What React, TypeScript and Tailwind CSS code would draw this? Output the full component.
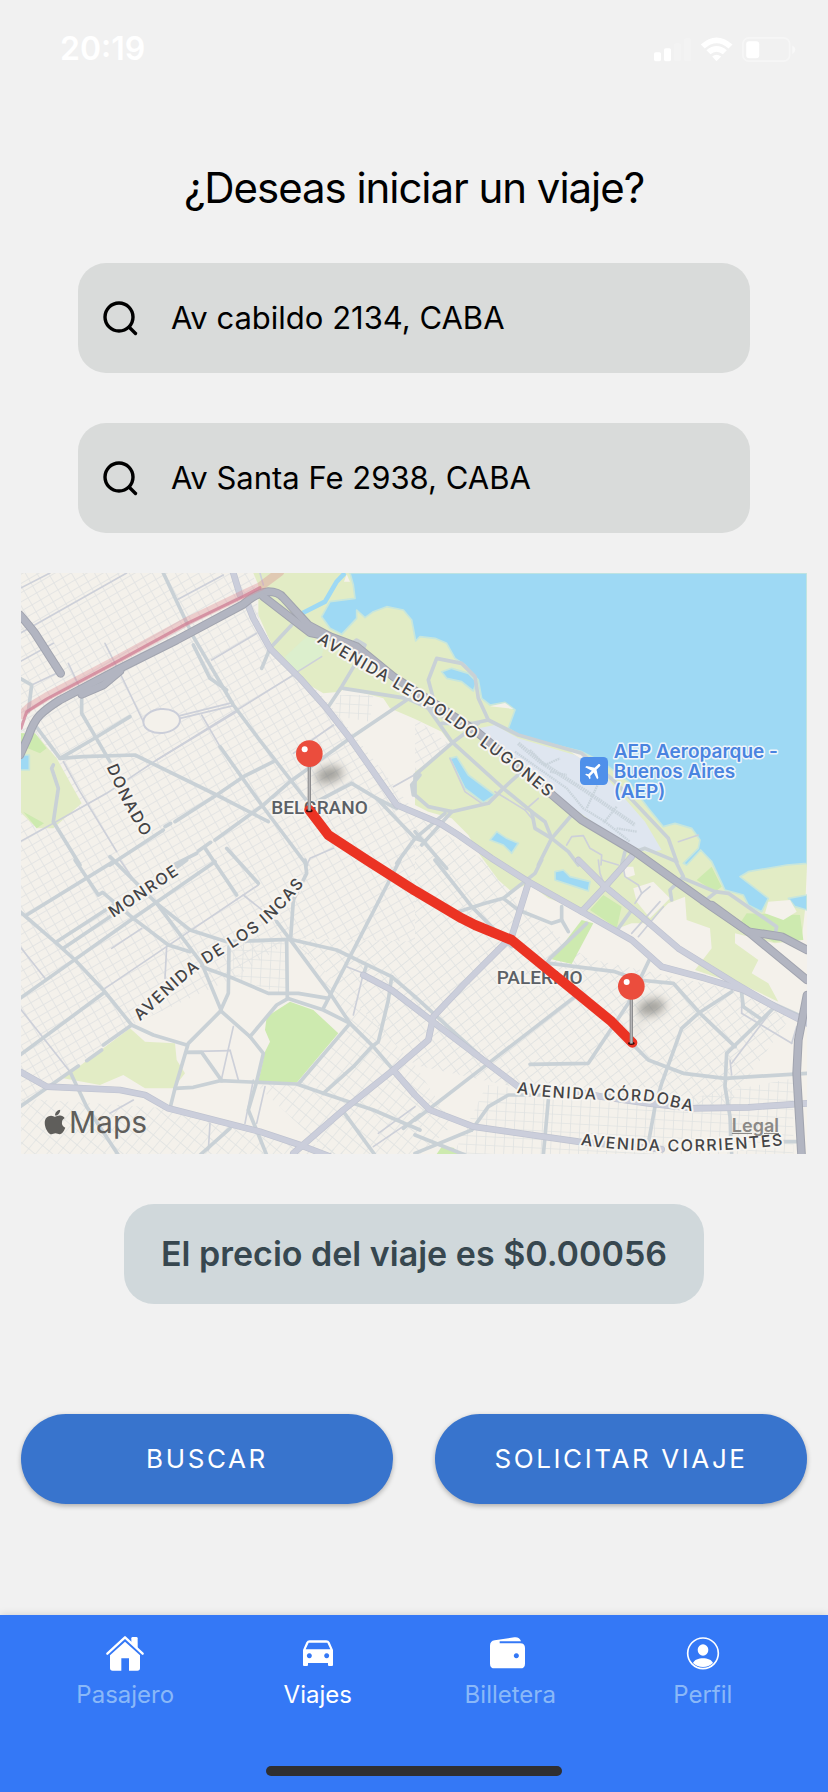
import React, { useState } from "react";
import { FaApple } from "react-icons/fa";
import { MdFlight } from "react-icons/md";

/* ---------- Map data: one list of points per line, by sector ---------- */

type Sector = { shift: string; lines: string[] };

const NE = "translate(1185 0)";
const SW = "translate(0 885)";
const SE = "translate(1185 885)";

const thinStreets: Sector[] = [
  {
    shift: "translate(0 0)",
    lines: [
      "0,70 90,24", "0,205 320,24", "0,290 100,235", "255,235 310,345 370,470", "470,105 610,30",
      "145,295 190,390", "545,450 600,545", "480,452 640,412", "480,460 640,422", "410,585 820,330",
      "130,590 180,680 290,860", "0,830 100,775 260,685 410,585 650,440", "35,360 110,325", "575,285 710,205",
      "720,24 730,60", "1120,665 1200,620", "820,565 940,480", "860,900 870,880 940,850", "825,325 905,275",
    ],
  },
  {
    shift: NE,
    lines: [
      "105,580 150,680 200,715", "240,680 330,735 350,760", "455,840 470,815 505,812 525,850 560,870 558,900",
      "560,885 610,900", "790,830 850,810", "370,700 330,735",
    ],
  },
  {
    shift: SW,
    lines: [
      "0,260 75,355", "0,445 150,635", "440,260 435,355", "255,385 440,260 670,105 715,75", "670,105 770,185",
      "640,500 605,655", "630,570 655,660", "500,575 630,572", "980,320 1030,340 1000,465", "735,680 710,790",
      "700,660 675,790", "570,790 565,870", "270,760 340,720", "275,265 365,205", "1060,860 1185,775",
      "1075,820 1185,740", "300,0 345,65",
    ],
  },
  {
    shift: SE,
    lines: [
      "945,600 950,645", "1075,445 950,610", "1130,550 980,460", "620,0 630,50 670,75 680,100 660,130",
      "650,220 735,125", "670,230 745,140", "550,0 555,40 570,80", "680,100 705,80", "1130,550 1145,500",
      "980,400 980,460",
    ],
  },
];

const streets: Sector[] = [
  {
    shift: "translate(0 0)",
    lines: [
      "430,24 520,215 640,420 715,520 870,720", "520,240 570,340 620,375", "185,400 185,445 270,590",
      "45,480 120,580 215,525 330,455", "120,580 190,575 345,570 590,690 745,770", "0,340 35,360 25,440",
      "600,545 725,720 860,900", "270,900 430,795", "435,785 452,775", "465,770 590,690 670,635 760,590",
      "440,910 530,865", "535,858 572,832", "585,825 730,720 810,650 990,520 1160,405", "970,370 1160,400 1250,440",
      "925,425 965,365 1010,290 1035,240 1010,225 990,240", "995,655 1070,700 1185,820", "890,710 995,655",
      "100,600 95,610 115,670 100,770 180,900", "1130,895 1185,820 1275,745", "555,850 650,990",
      "620,850 715,955", "725,310 750,250 815,180", "1070,700 1130,730", "1180,690 1175,660 1200,630",
    ],
  },
  {
    shift: NE,
    lines: [
      "80,455 60,420 40,345 65,280 140,295 180,335 190,400 220,465 310,510 500,565 600,650 760,820 785,890",
      "220,465 175,475 80,475", "190,475 110,535 0,630 0,690 40,725 110,740 220,715 265,670 320,620",
      "0,410 40,430 110,530 265,670 350,740 390,770 410,820 460,860 490,900", "350,740 360,790 410,820",
      "470,750 410,820 370,900", "0,800 60,870 95,910", "110,740 20,840", "0,820 30,830", "620,900 630,860",
      "660,860 690,850 785,890",
    ],
  },
  {
    shift: SW,
    lines: [
      "0,155 110,250 165,300 250,390 335,495 400,525 500,555", "20,165 280,5", "110,245 280,135",
      "130,265 270,170 500,0", "0,415 340,175 585,5", "0,585 250,400", "165,0 235,105 248,97 340,175",
      "270,-10 340,60 410,130 545,310 605,455 690,530 730,580 710,665 685,750 740,885",
      "410,130 510,210 620,245 810,238 950,270 1115,350 1185,410", "340,175 445,255 510,275",
      "545,320 640,355 745,400 835,400 925,415", "627,260 625,400 600,455 505,550 465,685 450,745",
      "800,240 802,415 910,450 990,490", "810,238 930,400 990,490 1060,560 1120,630", "1140,0 990,290 910,445",
      "690,530 770,435 805,415", "335,495 250,555", "245,570 200,602", "175,618 0,740",
      "465,685 520,682 600,662 830,672 910,700 1060,750 1200,810", "500,577 545,577 605,662", "990,490 835,672",
      "1115,350 1105,420 1075,545 1055,560 1000,620 910,700", "150,635 200,740 295,885", "970,755 1065,885",
      "630,805 540,885", "770,185 810,238", "855,0 860,40 820,120 812,235", "1040,315 1030,345", "1150,805 1200,765",
    ],
  },
  {
    shift: SE,
    lines: [
      "60,0 170,140 290,260", "130,155 210,130 265,115 360,40 380,0", "265,115 310,150 410,190 440,180",
      "440,140 440,180 460,215", "515,190 405,295 395,310", "405,310 600,335 670,360 775,370 855,460 960,560",
      "705,295 640,430 520,610 345,613", "950,395 850,460 800,505 740,670 720,740 700,850",
      "660,560 700,600 805,640 930,655 1176,640", "980,400 985,440 1035,475",
      "1080,440 935,580 930,680 945,770 950,885", "480,410 220,610 0,780", "0,410 220,610",
      "400,705 280,705 220,740 170,810", "0,825 150,885", "0,880 170,810", "400,720 385,885",
      "610,205 650,150", "770,120 765,90 805,50 780,0", "805,55 900,95 940,100 1085,200 1080,225", "860,130 905,95",
      "985,390 1150,465", "1100,845 1145,845",
    ],
  },
];

const avenues: Sector[] = [
  {
    shift: "translate(0 0)",
    lines: ["640,24 660,90", "680,110 700,160 750,250 840,340 920,430 990,520 1130,720 1260,775 1315,810 1415,880 1525,950 1685,1040 1835,1125 1925,1205 2055,1240 2170,1275 2245,1315 2361,1375"],
  },
  {
    shift: SW,
    lines: [
      "0,635 80,680 300,690 375,705 445,745 720,815 840,855 930,890",
      "820,880 970,750 1120,630 1225,540 1240,470 1330,375 1430,275 1475,230 1525,70",
      "1120,630 1185,705 1230,750 1360,800 1675,845 1925,868", "1030,345 1115,390 1245,490 1495,680",
    ],
  },
  {
    shift: SE,
    lines: [
      "490,695 560,710 700,730 835,745 1000,742 1176,730", "490,0 570,80 680,170 790,265 960,370 1080,440 1176,485",
      "500,155 570,80 650,-10",
    ],
  },
];

const highways = [
  "M0 570 L25 515 Q40 470 60 450 Q80 430 120 405 L300 310 L470 225 L670 118 Q710 82 745 80 Q775 80 790 98 L865 180 L930 215 L1010 245 L1120 335 L1250 420 L1370 500 L1585 680 L1685 765 L1845 860 L2075 1025 L2185 1100 L2361 1245",
  "M0 150 Q30 185 45 205 L122 325",
  "M185 388 L250 360 L300 318",
  "M730 95 L870 203 L930 215",
  "M2075 1020 L2185 1100 L2285 1115 L2361 1155",
  "M2361 1290 L2335 1425 L2330 1525 L2345 1775",
];

const parks = [
  "700,24 715,60 715,150 760,250 800,300 850,350 910,385 960,380 975,370 1090,400 1110,430 1185,462 1265,500 1295,540 1185,620 1185,720 1225,740 1295,760 1345,810 1380,870 1435,945 1475,980 1525,955 1585,1000 1685,1035 1730,1055 1795,1090 1835,1075 1885,1075 1945,1015 1995,995 2000,1065 2070,1090 2075,1150 2025,1215 2085,1235 2170,1260 2275,1310 2245,1255 2195,1225 2215,1185 2145,1135 2145,1105 2265,1135 2345,1125 2355,1035 2361,900 2361,24",
  "0,505 45,505 110,580 185,715 100,790 50,790 0,740",
  "330,1390 375,1430 465,1435 470,1485 495,1525 460,1570 375,1570 310,1530 240,1560 130,1540",
];

const woods = [
  "810,1310 880,1335 955,1405 830,1553 715,1550 735,1460 750,1430 735,1395 740,1355",
  "1710,1035 1750,990 1805,1025 1790,1090",
  "1685,1065 1720,1075 1655,1197 1595,1183",
  "2030,945 2075,905 2105,965 2085,980",
  "2180,1045 2340,1050 2350,1125 2260,1130 2160,1075",
  "1250,1767 1265,1745 1300,1748 1320,1767",
  "0,505 45,505 80,550 60,565 0,540",
  "10,740 50,790 72,775",
];

const water = [
  "990,24 1000,60 1005,100 930,110 905,155 930,190 965,208 1010,160 1010,135 1035,158 1060,140 1100,125 1150,135 1175,165 1187,228 1200,215 1245,220 1280,235 1305,280 1335,300 1375,345 1385,400 1410,420 1455,412 1485,435 1465,490 1505,515 1645,550 1685,560 1745,590 1825,650 1885,730 1930,785 1965,775 2015,790 2040,825 2035,850 1990,895 2000,900 2042,855 2075,890 2115,975 2170,990 2185,1020 2225,1040 2245,1000 2160,935 2185,920 2300,900 2361,895 2361,24",
  "2305,1000 2361,990 2361,1035 2325,1025",
  "1265,320 1295,310 1345,325 1370,350 1360,378 1325,350 1280,340",
  "1290,580 1310,575 1345,630 1425,690 1390,712 1335,670",
  "1410,825 1430,800 1460,820 1495,835 1475,865 1450,840",
  "1605,920 1630,915 1650,935 1710,950 1705,978 1665,965 1605,945",
  "0,570 28,570 28,615 0,615",
];

const blocks = [
  { fill: "url(#grid-west)", points: "0,24 700,24 720,180 930,420 1185,740 1185,1130 820,1120 640,1240 335,1380 0,1620" },
  { fill: "url(#grid-palermo)", points: "1185,740 1410,900 1525,1040 1700,1180 2170,1280 2310,1360 2110,1640 1500,1570 1185,1500 820,1120 1185,1130" },
  { fill: "url(#grid-flat)", points: "640,1130 800,1130 800,1290 640,1240" },
  { fill: "url(#grid-south)", points: "0,1600 440,1630 1000,1767 0,1767" },
  { fill: "url(#grid-south)", points: "820,1120 1185,1500 1300,1680 1200,1767 930,1767 710,1560 840,1550 990,1370" },
  { fill: "url(#grid-flat)", points: "1400,1560 1900,1620 2320,1540 2320,1767 1300,1767" },
  { fill: "url(#grid-flat)", points: "960,390 1060,390 1050,470 930,450" },
  { fill: "url(#grid-west)", points: "1185,460 1290,540 1185,620" },
];

const roadLabels = [
  { id: "lugones", text: "AVENIDA LEOPOLDO LUGONES", d: "M890 230 C1000 300 1180 395 1300 482 S1480 610 1640 745" },
  { id: "donado", text: "DONADO", d: "M260 605 C290 680 330 760 390 850" },
  { id: "monroe", text: "MONROE", d: "M280 1059 L540 885" },
  { id: "incas", text: "AVENIDA DE LOS INCAS", d: "M360 1369 C430 1305 500 1235 560 1197 C620 1160 680 1125 720 1093 C770 1055 820 1000 880 920" },
  { id: "cordoba", text: "AVENIDA CÓRDOBA", d: "M1490 1584 C1585 1603 1785 1606 1875 1608 C1925 1613 1975 1635 2100 1655" },
  { id: "corrientes", text: "AVENIDA CORRIENTES", d: "M1682 1740 C1825 1761 2050 1771 2345 1734" },
];

function Roads({ sectors, className }: { sectors: Sector[]; className: string }) {
  return (
    <g className={className} fill="none" strokeLinejoin="round" strokeLinecap="round">
      {sectors.map((s) => (
        <g key={s.shift} transform={s.shift}>
          {s.lines.map((l) => (
            <polyline key={l} points={l} />
          ))}
        </g>
      ))}
    </g>
  );
}

function Grid({ id, angle, w, h }: { id: string; angle: number; w: number; h: number }) {
  return (
    <pattern id={id} width={w} height={h} patternUnits="userSpaceOnUse" patternTransform={`rotate(${angle})`}>
      <path d={`M0 1 H${w} M1 0 V${h}`} stroke="#e1e3e2" strokeWidth="3" fill="none" />
    </pattern>
  );
}

function Pin({ x, y }: { x: number; y: number }) {
  return (
    <g transform={`translate(${x} ${y})`}>
      <ellipse cx="60" cy="-108" rx="42" ry="24" fill="#6b6a66" opacity="0.6" filter="url(#soft)" transform="rotate(-14 60 -108)" />
      <path d="M10 -25 L35 -85" stroke="#777" strokeWidth="18" opacity="0.14" filter="url(#soft)" />
      <ellipse cx="0" cy="0" rx="10" ry="5" fill="#3a0a08" />
      <rect x="-5" y="-135" width="10" height="136" rx="3" fill="#8d8d8f" />
      <rect x="-2" y="-135" width="4" height="134" fill="#b5b5b7" />
      <circle cx="0" cy="-171" r="40" fill="#eb4d3d" />
      <circle cx="-14" cy="-184" r="9" fill="#fff" />
    </g>
  );
}

function RouteMap() {
  return (
    <section aria-label="Mapa del viaje" className="relative">
      <svg viewBox="3 24 2358 1743" className="block w-full bg-[#f4f1eb]">
        <defs>
          <Grid id="grid-west" angle={-30} w={30} h={24} />
          <Grid id="grid-palermo" angle={-38} w={32} h={25} />
          <Grid id="grid-south" angle={-50} w={34} h={26} />
          <Grid id="grid-flat" angle={3} w={28} h={26} />
          <filter id="soft" x="-80%" y="-150%" width="260%" height="400%">
            <feGaussianBlur stdDeviation="15" />
          </filter>
        </defs>

        {blocks.map((b) => (
          <polygon key={b.points} points={b.points} fill={b.fill} />
        ))}
        {parks.map((p) => (
          <polygon key={p} points={p} fill="#e2ecc5" />
        ))}
        {woods.map((p) => (
          <polygon key={p} points={p} fill="#cdeaaf" />
        ))}
        <polygon points="795,275 865,210 910,250 905,275 825,325" fill="#dcefcd" />
        <g stroke="#c8e6dc" strokeWidth="5" strokeLinejoin="round">
          {water.map((p) => (
            <polygon key={p} points={p} fill="#9ed9f4" />
          ))}
        </g>
        <polyline points="848,144 915,110 950,50 975,24" fill="none" stroke="#9ed9f4" strokeWidth="14" />
        <g fill="#f4f1eb">
          <polygon points="972,50 980,28 990,50" />
          <polygon points="1410,424 1455,414 1480,432" />
          <polygon points="1645,555 1680,560 1740,598 1720,610" />
          <polygon points="2245,1010 2310,1005 2330,1040 2290,1065 2235,1045" />
          <polygon points="1805,905 1840,905 1845,930 1815,940" />
          <polygon points="1840,970 1900,950 1950,1000 1890,1060 1850,1010" />
        </g>
        <polygon points="1375,490 1425,480 1495,520 1665,570 1745,620 1805,690 1875,770 1925,855 1885,862 1800,830 1605,690 1485,600" fill="#dfe6f0" />
        <g fill="none" stroke="#cad4dc" strokeWidth="7" strokeDasharray="5 2">
          <polyline points="1495,535 1560,590 1700,680 1845,780" strokeWidth="12" />
          <polyline points="1485,560 1640,670 1690,730 1755,770 1830,830" />
          <polyline points="1530,555 1575,600 1620,580" />
          <polyline points="1590,620 1640,630" />
          <polyline points="1735,655 1700,730" />
          <polyline points="1790,725 1750,775" />
          <polyline points="1790,790 1850,800" />
        </g>

        <Roads sectors={thinStreets} className="stroke-[#cdd0d9] stroke-[5px]" />
        <ellipse cx="425" cy="468" rx="55" ry="36" transform="rotate(-5 425 468)" fill="#f4f1eb" stroke="#cbced9" strokeWidth="6" />
        <Roads sectors={streets} className="stroke-[#c9d1d6] stroke-[11px]" />
        <Roads sectors={avenues} className="stroke-[#bfc3d0] stroke-[20px]" />
        <Roads sectors={avenues} className="stroke-[#cbcedb] stroke-[16px]" />
        <g fill="none" strokeLinejoin="round" strokeLinecap="round">
          {highways.map((h) => (
            <path key={h} d={h} stroke="#a1a4af" strokeWidth="26" />
          ))}
          {highways.map((h) => (
            <path key={h} d={h} stroke="#b2b5c1" strokeWidth="20" />
          ))}
          <polyline points="3,450 30,425 80,395 280,290 500,170 670,88 720,65 780,20" stroke="#dd8a92" strokeWidth="26" opacity="0.35" />
          <polyline points="3,490 20,440 80,402 280,296 500,176 670,94 720,68" stroke="#cf7f95" strokeWidth="9" opacity="0.75" />
        </g>

        <g className="fill-[#434345] stroke-[#f7f5f1] stroke-[12px] font-['Inter',sans-serif] text-[48px] font-medium tracking-[0.1em]" paintOrder="stroke" strokeLinejoin="round">
          {roadLabels.map((l) => (
            <React.Fragment key={l.id}>
              <path id={l.id} d={l.d} fill="none" stroke="none" />
              <text>
                <textPath href={`#${l.id}`}>{l.text}</textPath>
              </text>
            </React.Fragment>
          ))}
        </g>
        <g className="fill-[#5b6066] stroke-[#f7f5f1] stroke-[10px] font-['Roboto',sans-serif] text-[57px] font-medium" paintOrder="stroke" strokeLinejoin="round">
          <text x="754" y="747">BELGRANO</text>
          <text x="1430" y="1257">PALERMO</text>
        </g>

        <rect x="1680" y="576" width="84" height="84" rx="14" fill="#4f90ea" />
        <MdFlight x="1690" y="586" size={64} color="#fff" transform="rotate(45 1722 618)" />
        <g className="fill-[#4a84e0] stroke-[#eef5fb] stroke-[9px] font-['Inter',sans-serif] text-[57px] font-semibold" paintOrder="stroke" strokeLinejoin="round">
          <text x="1781" y="578">AEP Aeroparque -</text>
          <text x="1781" y="638">Buenos Aires</text>
          <text x="1781" y="698">(AEP)</text>
        </g>

        <polyline
          points="868,735 925,810 1040,885 1185,977 1325,1060 1365,1080 1475,1125 1585,1215 1665,1280 1775,1370 1837,1433"
          fill="none"
          stroke="#eb3323"
          strokeWidth="30"
          strokeLinecap="round"
          strokeLinejoin="round"
        />
        <Pin x={868} y={737} />
        <Pin x={1834} y={1435} />
      </svg>
      <div className="absolute bottom-3 left-5 flex items-center text-[#5f5e5b]">
        <FaApple className="size-7" />
        <span className="text-[30px] leading-10">Maps</span>
      </div>
      <a href="#legal" className="absolute right-7 bottom-4 text-[18px] leading-6 font-semibold text-[#8b8986] underline">
        Legal
      </a>
    </section>
  );
}

/* ---------- Form ---------- */

function AddressField({ label, initial }: { label: string; initial: string }) {
  const [value, setValue] = useState(initial);
  return (
    <label className="flex h-[110px] items-center gap-[33px] rounded-[28px] bg-[#d9dbda] px-6">
      <svg viewBox="0 0 36 36" className="size-9 shrink-0" fill="none" stroke="#000" strokeWidth="3.4" strokeLinecap="round" aria-hidden="true">
        <circle cx="17" cy="17" r="14" />
        <path d="M27.500 27.500 L33.500 33.500" />
      </svg>
      <input
        type="text"
        aria-label={label}
        value={value}
        onChange={(e) => setValue(e.target.value)}
        className="w-full min-w-0 bg-transparent text-[31px] leading-10 text-black outline-none"
      />
    </label>
  );
}

function ActionButton({ children }: { children: React.ReactNode }) {
  return (
    <button
      type="button"
      className="h-[90px] flex-1 rounded-full bg-[#3874cd] text-[26px] leading-8 tracking-widest text-white shadow-[0_2px_5px_rgba(0,0,0,0.28)]"
    >
      {children}
    </button>
  );
}

/* ---------- Bottom navigation ---------- */

function HomeIcon() {
  return (
    <svg viewBox="45 32 120 108" width="40" height="36" fill="#fff" aria-hidden="true">
      <path d="M52 88 L105 39 L158 88" fill="none" stroke="#fff" strokeWidth="7" strokeLinecap="round" strokeLinejoin="round" />
      <path d="M124 42 q0-4 4-4 h11 q4 0 4 4 V72 L124 55 Z" />
      <path d="M105 52 L150 93 V131 q0 8 -8 8 H117 V102 H94 V139 H68 q-8 0 -8 -8 V93 Z" />
    </svg>
  );
}

function CarIcon() {
  return (
    <svg viewBox="621 32 120 108" width="40" height="36" fill="#fff" fillRule="evenodd" aria-hidden="true">
      <path d="M636 77 L646 54 Q649 48 656 48 H706 Q713 48 716 54 L726 77 V122 Q726 125 723 125 H714 Q711 125 711 122 V116 H651 V122 Q651 125 648 125 H639 Q636 125 636 122 Z M653 55 L644 75 H718 L709 55 Z M655 86.500 a7.500 7.500 0 1 0 .1 0 Z M707 86.500 a7.500 7.500 0 1 0 .1 0 Z" />
    </svg>
  );
}

function WalletIcon() {
  return (
    <svg viewBox="117 32 120 108" width="40" height="36" fill="#fff" fillRule="evenodd" aria-hidden="true">
      <path d="M117 64 Q117 50 131 48 L190 39 Q205 37 210 51 H146 V57 H208 Q222 57 222 71 V118 Q222 132 208 132 H131 Q117 132 117 118 Z M196 86.500 a7.500 7.500 0 1 0 .1 0 Z" />
    </svg>
  );
}

function ProfileIcon() {
  return (
    <svg viewBox="693 32 120 108" width="40" height="36" fill="#fff" aria-hidden="true">
      <circle cx="753" cy="87" r="46" fill="none" stroke="#fff" strokeWidth="5" />
      <ellipse cx="753" cy="77" rx="16" ry="17" />
      <path d="M723 116 C730 97 776 97 783 116 A43 43 0 0 1 723 116 Z" />
    </svg>
  );
}

const tabs = [
  { label: "Pasajero", Icon: HomeIcon, active: false },
  { label: "Viajes", Icon: CarIcon, active: true },
  { label: "Billetera", Icon: WalletIcon, active: false },
  { label: "Perfil", Icon: ProfileIcon, active: false },
];

function StatusBar() {
  return (
    <header className="flex h-[98px] items-center justify-between pr-8 pl-[60px] text-white">
      <time className="text-[32px] leading-10 font-semibold">20:19</time>
      <svg viewBox="66 48 428 80" className="h-[27px] w-[143px]" fill="#fff" aria-hidden="true">
        <rect x="69" y="96" width="21" height="27" rx="5" />
        <rect x="99" y="84" width="21" height="39" rx="5" />
        <rect x="129" y="69" width="21" height="54" rx="5" opacity="0.2" />
        <rect x="159" y="54" width="21" height="69" rx="5" opacity="0.2" />
        <path d="M209 73 Q256 31 304 73 L292 85 Q256 53 221 85 Z" />
        <path d="M226 90 Q256 65 287 90 L275 102 Q256 87 238 102 Z" />
        <path d="M243 109 Q256 99 270 109 L256 123 Z" />
        <rect x="335" y="53" width="140" height="70" rx="18" fill="none" stroke="#fff" strokeWidth="5" opacity="0.4" />
        <path d="M483 76 Q492 80 492 88 T483 102 Z" opacity="0.5" />
        <rect x="345" y="63" width="39" height="51" rx="9" />
      </svg>
    </header>
  );
}

export default function App() {
  return (
    <div className="flex min-h-screen flex-col bg-[#f1f1f1] font-['Inter',sans-serif]">
      <StatusBar />
      <main className="flex flex-1 flex-col px-[21px] pt-[60px]">
        <h1 className="text-center text-[42px] leading-[60px] tracking-tight text-black">¿Deseas iniciar un viaje?</h1>
        <form className="mt-[45px] flex flex-col gap-[50px] px-[57px]">
          <AddressField label="Origen" initial="Av cabildo 2134, CABA" />
          <AddressField label="Destino" initial="Av Santa Fe 2938, CABA" />
        </form>
        <div className="mt-10">
          <RouteMap />
        </div>
        <p className="mx-auto mt-[50px] flex min-h-[100px] items-center rounded-[30px] bg-[#d0d8db] px-[37px] text-[34px] leading-10 font-semibold text-[#37474f]">
          El precio del viaje es $0.00056
        </p>
        <div className="mt-[110px] mb-[110px] flex gap-[42px]">
          <ActionButton>BUSCAR</ActionButton>
          <ActionButton>SOLICITAR VIAJE</ActionButton>
        </div>
      </main>
      <footer className="flex h-[177px] flex-col items-center justify-between bg-[#3478f6] px-[29px] pb-4 shadow-[0_0_8px_rgba(0,0,0,0.15)]">
        <nav className="flex w-full pt-5">
          {tabs.map(({ label, Icon, active }) => (
            <a
              key={label}
              href={`#${label.toLowerCase()}`}
              aria-current={active ? "page" : undefined}
              className={`flex flex-1 flex-col items-center gap-2 text-[24px] leading-8 ${active ? "text-white" : "text-[#8ab8f8]"}`}
            >
              <Icon />
              {label}
            </a>
          ))}
        </nav>
        <div className="h-2.5 w-[296px] rounded-full bg-[#2f2f31]" />
      </footer>
    </div>
  );
}
